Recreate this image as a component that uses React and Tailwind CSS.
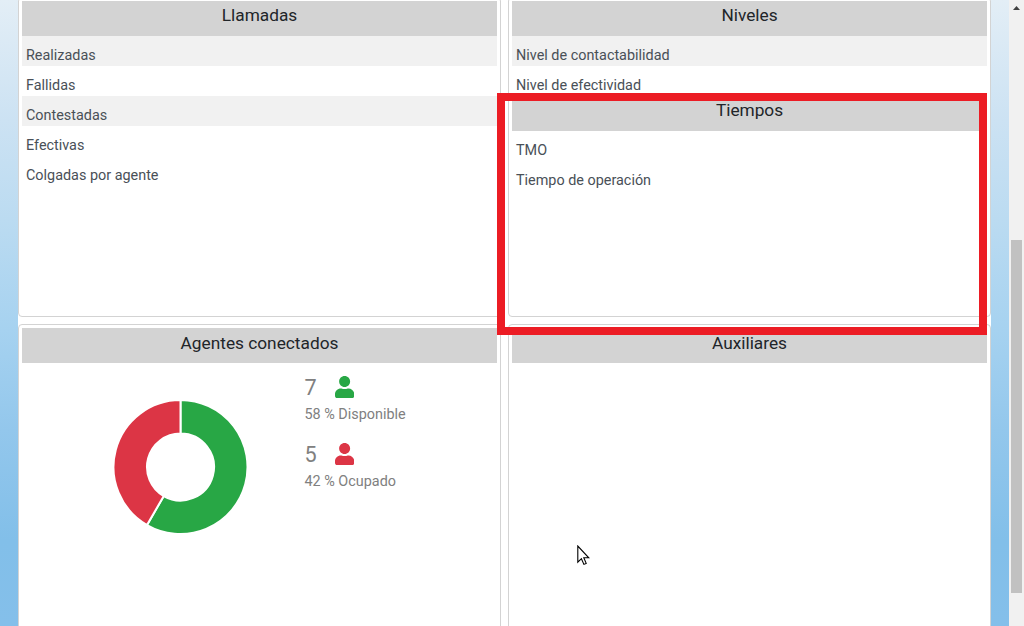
import React from "react";

function Card({ children }) {
  return (
    <section className="w-[483px] shrink-0 rounded border border-[#d3d3d3] bg-white p-[3px]">
      {children}
    </section>
  );
}

function Header({ children, low }) {
  return (
    <h2 className={(low ? "pt-[3px]" : "pt-[2px]") + " h-[35px] bg-[#d3d3d3] text-center text-[17.28px] leading-6 text-[#212529]"}>
      {children}
    </h2>
  );
}

function Row({ children, striped }) {
  return (
    <li className={striped ? "h-[30px] bg-[#f1f1f1] px-1 pt-[9px]" : "h-[30px] px-1 pt-[9px]"}>{children}</li>
  );
}

function List({ children }) {
  return <ul className="text-[14.4px] leading-[21px] text-[#495057]">{children}</ul>;
}

function UserIcon({ className }) {
  return (
    <svg viewBox="0 0 448 512" className={className} fill="currentColor">
      <path d="M224 256c70.7 0 128-57.3 128-128S294.7 0 224 0 96 57.3 96 128s57.3 128 128 128zm89.6 32h-16.7c-22.2 10.2-46.9 16-72.9 16s-50.6-5.8-72.9-16h-16.7C60.2 288 0 348.2 0 422.4V464c0 26.5 21.5 48 48 48h352c26.5 0 48-21.5 48-48v-41.6c0-74.2-60.2-134.4-134.4-134.4z" />
    </svg>
  );
}

function Stat({ count, label, iconClass }) {
  return (
    <div className="h-[67px]">
      <div className="flex h-[26px] items-center">
        <span className="w-[30.5px] pt-[2px] text-[21.6px] leading-[26px] text-[#808080]">{count}</span>
        <UserIcon className={iconClass} />
      </div>
      <p className="mt-[4px] text-[14.4px] leading-[22px] text-[#808080]">{label}</p>
    </div>
  );
}

function Donut() {
  return (
    <svg viewBox="-67.5 -67 134 134" className="ml-[91px] mt-[37px] h-[134px] w-[134px] shrink-0 overflow-visible">
      <path d="M0-67A67 67 0 1 1-33.5 58.02L-16.75 29.01A33.5 33.5 0 1 0 0-33.5Z" fill="#28a745" stroke="#fff" strokeWidth="2" />
      <path d="M-33.5 58.02A67 67 0 0 1 0-67L0-33.5A33.5 33.5 0 0 0-16.75 29.01Z" fill="#dc3545" stroke="#fff" strokeWidth="2" />
    </svg>
  );
}

export default function App() {
  return (
    <div className="relative flex h-[626px] w-[1024px] overflow-hidden bg-[linear-gradient(to_bottom,#e3eef6_0px,#cce2f3_120px,#bbdbf1_220px,#a6d2f0_330px,#93c7ec_430px,#82bfe9_540px,#84bfea_626px)] font-['Roboto',sans-serif]">
      <main className="ml-[18px] -mt-[3px] grid h-[680px] w-[973px] shrink-0 grid-cols-[483px_483px] grid-rows-[320px_353px] gap-[7px] bg-white">
        <Card>
          <Header>Llamadas</Header>
          <List>
            <Row striped>Realizadas</Row>
            <Row>Fallidas</Row>
            <Row striped>Contestadas</Row>
            <Row>Efectivas</Row>
            <Row>Colgadas por agente</Row>
          </List>
        </Card>
        <Card>
          <Header>Niveles</Header>
          <List>
            <Row striped>Nivel de contactabilidad</Row>
            <Row>Nivel de efectividad</Row>
          </List>
          <Header>Tiempos</Header>
          <List>
            <Row>TMO</Row>
            <Row>Tiempo de operación</Row>
          </List>
        </Card>
        <Card>
          <Header low>Agentes conectados</Header>
          <div className="flex">
            <Donut />
            <div className="ml-[57.5px] pt-[11px]">
              <Stat count="7" label="58 % Disponible" iconClass="h-[22px] w-[19.25px] text-[#28a745]" />
              <Stat count="5" label="42 % Ocupado" iconClass="h-[22px] w-[19.25px] text-[#dc3545]" />
            </div>
          </div>
        </Card>
        <Card>
          <Header low>Auxiliares</Header>
        </Card>
      </main>
      <aside className="ml-auto flex w-[15px] flex-col bg-[#f1f1f1]">
        <svg viewBox="0 0 15 15" className="h-[15px] w-[15px]">
          <path d="M4 10L7.5 6L11 10Z" fill="#404040" />
        </svg>
        <div className="mt-[225px] ml-[2px] h-[353px] w-[11px] bg-[#c1c1c1]" />
      </aside>
      <div className="absolute left-[497px] top-[93px] h-[242px] w-[490px] border-8 border-[#ec1c24]" />
      <svg viewBox="0 0 13 21" className="absolute left-[577px] top-[545px] h-[21px] w-[13px]">
        <path d="M.8 1V17.2L4.4 13.7L6.9 19.4L9.2 18.4L6.8 12.8H11.8Z" fill="#fff" stroke="#000" strokeWidth="1.1" />
      </svg>
    </div>
  );
}
